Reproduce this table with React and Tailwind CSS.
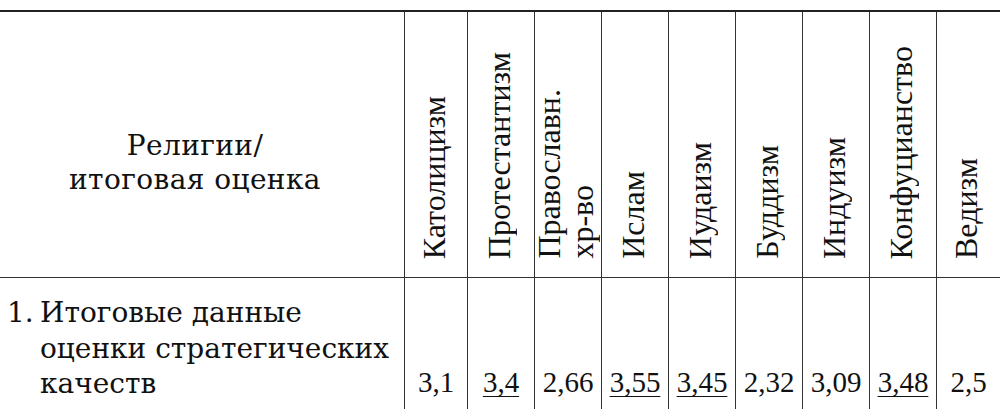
const columns = [
  { name: ['Католицизм'], value: '3,1' },
  { name: ['Протестантизм'], value: '3,4', mark: true },
  { name: ['Православн.', 'хр-во'], value: '2,66' },
  { name: ['Ислам'], value: '3,55', mark: true },
  { name: ['Иудаизм'], value: '3,45', mark: true },
  { name: ['Буддизм'], value: '2,32' },
  { name: ['Индуизм'], value: '3,09' },
  { name: ['Конфуцианство'], value: '3,48', mark: true },
  { name: ['Ведизм'], value: '2,5' },
]

export default function App() {
  return (
    <div className="h-[409px] w-[1000px] overflow-hidden bg-white text-[#111]">
      <div className="mt-[10px] border-t-2 border-[#222]">
        <div className="grid grid-cols-[404px_63px_67px_67px_67px_67px_67px_67px_67px_64px] border-b border-[#333]">
          {/* ── header: row label ─────────────────────────── */}
          <div className="flex h-[265px] items-center justify-center pt-[36px] pr-[14px] text-center font-['DejaVu_Serif',serif] text-[28px] leading-[34px] tracking-[0.4px]">
            <p>
              Религии/
              <br />
              итоговая оценка
            </p>
          </div>

          {/* ── header: rotated religion names ───────────── */}
          {columns.map(col => (
            <div
              key={col.name[0]}
              className="flex h-[265px] items-end justify-center border-l border-[#333] pb-[18px] pr-[4px] font-['Liberation_Serif','Times_New_Roman',serif] text-[32px] leading-[33px]"
            >
              <span className="rotate-180 text-start [writing-mode:vertical-rl]">
                {col.name.map((line, i) => (
                  <span key={i}>
                    {i > 0 && <br />}
                    {line}
                  </span>
                ))}
              </span>
            </div>
          ))}
        </div>

        {/* ── body row ───────────────────────────────────── */}
        <div className="grid h-[140px] grid-cols-[404px_63px_67px_67px_67px_67px_67px_67px_67px_64px]">
          <div className="flex pt-[17px] pl-[7px] font-['DejaVu_Serif',serif] text-[28px] leading-[35.5px]">
            <span className="w-[33px] shrink-0">1.</span>
            <span>
              Итоговые данные
              <br />
              оценки стратегических
              <br />
              качеств
            </span>
          </div>
          {columns.map(col => (
            <div
              key={col.name[0]}
              className="flex items-start justify-center border-l border-[#333] pt-[87px] font-['Liberation_Serif','Times_New_Roman',serif] text-[29px] leading-[35px]"
            >
              <span className={col.mark ? 'underline decoration-1 underline-offset-[4px]' : ''}>
                {col.value}
              </span>
            </div>
          ))}
        </div>
      </div>
    </div>
  )
}
